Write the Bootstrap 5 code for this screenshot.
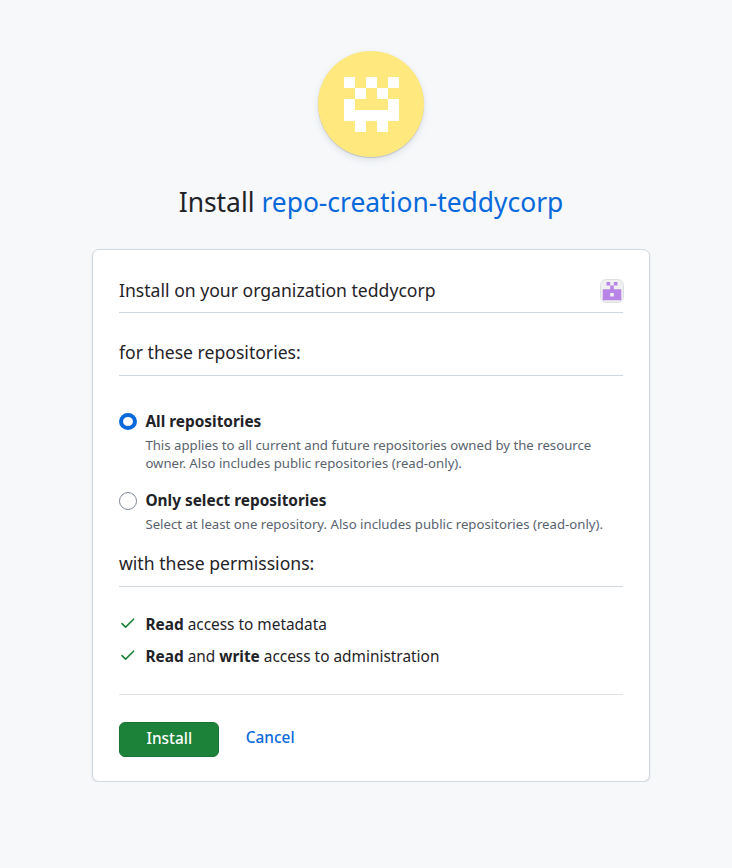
<!DOCTYPE html>
<html lang="en">
<head>
<meta charset="utf-8">
<meta name="viewport" content="width=device-width, initial-scale=1">
<title>Install repo-creation-teddycorp</title>
<link href="https://cdn.jsdelivr.net/npm/bootstrap@5.3.0/dist/css/bootstrap.min.css" rel="stylesheet">
<style>
body{background:#f6f8fa;color:#1f2328;font-family:"Noto Sans",sans-serif;font-size:15.4px;line-height:24px}
.page{width:558px;margin-left:92px;padding-top:51px}
.avatar{width:106px;height:106px;background:#ffe97f;box-shadow:0 1px 1px rgba(140,149,159,.45),0 3px 7px rgba(140,149,159,.22)}
.title{font-size:26.4px;line-height:40px;margin:25px 0 27px;font-weight:400}
a{color:#0969da}
.panel{height:533px;border:1px solid #d1d9e0;border-radius:7px;padding:26px;box-shadow:0 1px 2px rgba(140,149,159,.25)}
.head{font-size:17.6px;line-height:28px;font-weight:400;border-bottom:1px solid #d1d9e0;margin:0}
.h-one{height:37px}
.h-two{height:38px;margin-top:25px}
.h-three{height:38px;margin-top:16px}
.owner{margin:3px -1px 0 0}
.option{padding-left:26.4px}
.option-first{margin-top:34px}
.option-next{margin-top:17px}
.option .form-check-input{width:18px;height:18px;margin:3px 0 0 -26.4px;float:left;border:1px solid #818b98;background:#fff none;box-shadow:none}
.option .form-check-input:checked{height:17px;border:4px solid #0969da}
.option label{font-weight:700;display:block}
.option p{font-size:13.2px;line-height:18px;color:#59636e;margin:2px 0 0;white-space:nowrap}
.perms{margin-top:26px}
.perms li{height:32px}
.perms svg{width:17.6px;height:17.6px;margin:1px 8.8px 0 0;fill:#1a7f37}
.rule{border-top:1px solid #dfe4e9;margin-top:17px}
.actions{margin-top:27px}
.go,.go:hover{width:100px;height:35px;background:#1c8139;border:1px solid #197433;border-radius:6px;color:#fff;font-size:15.4px;line-height:30px;font-weight:500;padding:0 0 1px .5px}
.cancel{font-weight:500;margin:4px 0 0 26.8px}
</style>
<script src="https://cdn.jsdelivr.net/npm/bootstrap@5.3.0/dist/js/bootstrap.bundle.min.js"></script>
</head>
<body>
<main class="page">
  <div class="avatar rounded-circle mx-auto d-flex">
    <svg width="106" height="106" viewBox="0 0 106 106" shape-rendering="crispEdges" aria-hidden="true"><path fill="#fff" d="M26 26h11v11H26zM48 26h11v11H48zM70 26h11v11H70zM37 37h11v11H37zM59 37h11v11H59zM26 48h11v11h33V48h11v22H70v11H59V70H48v11H37V70H26z"/></svg>
  </div>
  <h1 class="title text-center">Install <a href="#" class="text-decoration-none">repo-creation-teddycorp</a></h1>
  <section class="panel bg-white">
    <div class="head h-one d-flex justify-content-between">
      <span>Install on your organization teddycorp</span>
      <svg class="owner" width="24" height="24" viewBox="0 0 24 24" aria-hidden="true"><rect x=".5" y=".5" width="23" height="23" rx="6" fill="#f0f0f0" stroke="#dcdfe2"/><path fill="#b884e6" fill-rule="evenodd" d="M6.5 3h3.7v3.6H6.500zM13.800 3h3.700v3.600h-3.700zM10.200 6.600h3.600v3.700h7.500v11H2.700v-11h7.500zM10.200 14v3.600h3.600V14z"/></svg>
    </div>
    <h2 class="head h-two">for these repositories:</h2>
    <div class="option option-first">
      <input class="form-check-input" type="radio" name="target" id="all" checked>
      <label for="all">All repositories</label>
      <p>This applies to all current and future repositories owned by the resource<br>owner. Also includes public repositories (read-only).</p>
    </div>
    <div class="option option-next">
      <input class="form-check-input" type="radio" name="target" id="some">
      <label for="some">Only select repositories</label>
      <p>Select at least one repository. Also includes public repositories (read-only).</p>
    </div>
    <h2 class="head h-three">with these permissions:</h2>
    <ul class="perms list-unstyled mb-0">
      <li class="d-flex"><svg viewBox="0 0 16 16" aria-hidden="true"><path d="M13.780 4.220a.75.75 0 0 1 0 1.060l-7.250 7.250a.75.75 0 0 1-1.060 0L2.220 9.280a.751.751 0 0 1 .018-1.042.751.751 0 0 1 1.042-.018L6 10.940l6.720-6.720a.75.75 0 0 1 1.060 0Z"/></svg><span><b>Read</b> access to metadata</span></li>
      <li class="d-flex"><svg viewBox="0 0 16 16" aria-hidden="true"><path d="M13.780 4.220a.75.75 0 0 1 0 1.060l-7.250 7.250a.75.75 0 0 1-1.060 0L2.220 9.280a.751.751 0 0 1 .018-1.042.751.751 0 0 1 1.042-.018L6 10.940l6.720-6.720a.75.75 0 0 1 1.060 0Z"/></svg><span><b>Read</b> and <b>write</b> access to administration</span></li>
    </ul>
    <div class="rule"></div>
    <div class="actions d-flex align-items-start">
      <button class="btn go" type="button">Install</button>
      <a href="#" class="cancel text-decoration-none">Cancel</a>
    </div>
  </section>
</main>
</body>
</html>
